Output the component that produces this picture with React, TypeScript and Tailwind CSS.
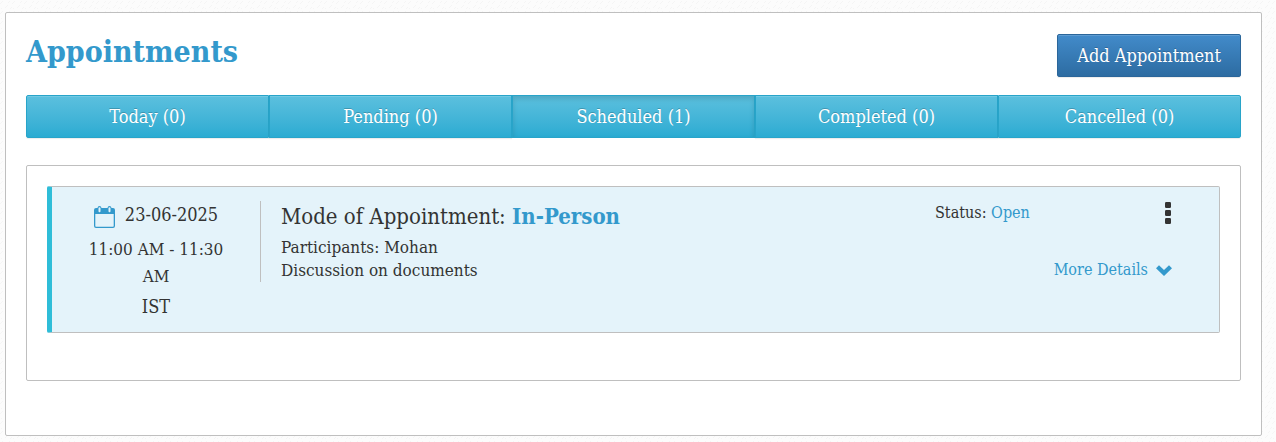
import { clsx } from 'clsx';

const tabs = [
  { label: 'Today', count: 0 },
  { label: 'Pending', count: 0 },
  { label: 'Scheduled', count: 1 },
  { label: 'Completed', count: 0 },
  { label: 'Cancelled', count: 0 },
];

const appointments = [
  {
    date: '23-06-2025',
    time: '11:00 AM - 11:30 AM',
    zone: 'IST',
    mode: 'In-Person',
    participants: 'Mohan',
    description: 'Discussion on documents',
    status: 'Open',
  },
];

const CalendarIcon = () => (
  <svg width="21" height="22" viewBox="0 0 21 22" className="shrink-0" aria-hidden="true">
    <path
      fill="#3399cc"
      fillRule="evenodd"
      d="M2 2h1.500q.2-2 2-2t2 2h6q.2-2 2-2t2 2H19a2 2 0 0 1 2 2v16a2 2 0 0 1-2 2H2a2 2 0 0 1-2-2V4a2 2 0 0 1 2-2zM1.300 8v12q0 .7.700.700h17q.7 0 .7-.7V8z"
    />
    <path stroke="#e4f3fa" strokeWidth="2" strokeLinecap="round" d="M5.500 2.200v3M15.500 2.200v3" />
  </svg>
);

const DotsIcon = () => (
  <svg width="7" height="22" viewBox="0 0 7 22" fill="#333333" aria-hidden="true">
    <rect width="6" height="6" y="0" rx="1.200" />
    <rect width="6" height="6" y="8" rx="1.200" />
    <rect width="6" height="6" y="16" rx="1.200" />
  </svg>
);

const ChevronIcon = () => (
  <svg width="16" height="11" viewBox="0 0 16 11" fill="#3399cc" aria-hidden="true">
    <path d="M0 3.300 3 .300l5 4.600 5-4.600 3 3L8 11z" />
  </svg>
);

const Background = () => (
  <svg className="absolute inset-0 -z-10 h-full w-full" aria-hidden="true">
    <defs>
      <pattern id="weave" width="12" height="10" patternUnits="userSpaceOnUse">
        <path d="M0 4l3-3M5 8l3-3M8 3l2-2M1 9l1-1M10 9l2-2" stroke="#f5f5f5" />
      </pattern>
    </defs>
    <rect width="100%" height="100%" fill="url(#weave)" />
  </svg>
);

export default function App() {
  return (
    <div className="relative isolate min-h-screen bg-[#fcfcfc] pt-3 pr-3.5 pb-1.5 pl-[5px] font-['Roboto_Slab','DejaVu_Serif_Condensed','DejaVu_Serif',serif] text-[#333333]">
      <Background />
      <main className="rounded-xs border border-[#bfbfbf] bg-white px-5 pt-[21px] pb-[54px]">
        <div className="flex items-start justify-between">
          <h1 className="text-[30px] leading-9 font-bold text-[#3399cc]">Appointments</h1>
          <button
            type="button"
            className="rounded-xs border border-[#2b669a] bg-linear-to-b from-[#428bca] to-[#2d6ca2] px-[19px] py-2 text-[18px] leading-[25px] text-white shadow-[inset_0_1px_0_rgba(255,255,255,0.15),0_1px_1px_rgba(0,0,0,0.075)] text-shadow-[0_-1px_0_rgba(0,0,0,0.2)]"
          >
            Add Appointment
          </button>
        </div>

        <div className="mt-[18px] flex">
          {tabs.map((tab) => (
            <button
              key={tab.label}
              type="button"
              aria-pressed={tab.label === 'Scheduled'}
              className={clsx(
                'flex-1 border border-[#28a4c9] bg-linear-to-b from-[#5bc0de] to-[#2aabd2] py-2 text-[18px] leading-[25px] text-white text-shadow-[0_-1px_0_rgba(0,0,0,0.2)] first:rounded-l-xs last:rounded-r-xs',
                tab.label === 'Scheduled'
                  ? 'shadow-[inset_0_3px_5px_rgba(0,0,0,0.125)]'
                  : 'shadow-[inset_0_1px_0_rgba(255,255,255,0.15),0_1px_1px_rgba(0,0,0,0.075)]'
              )}
            >
              {tab.label} ({tab.count})
            </button>
          ))}
        </div>

        <div className="mt-[27px] rounded-xs border border-[#bfbfbf] px-5 pt-5 pb-[47px]">
          {appointments.map((item) => (
            <article
              key={item.date}
              className="flex items-start rounded-xs border border-l-[5px] border-[#bfbfbf] border-l-[#2fbdd8] bg-[#e4f3fa] pt-3.5 pb-3"
            >
              <div className="w-52 shrink-0 px-8 text-center text-[18px] leading-[27px]">
                <div className="flex items-end justify-center gap-2.5">
                  <CalendarIcon />
                  <span>{item.date}</span>
                </div>
                <p className="mt-2 text-[17px]">{item.time}</p>
                <p className="mt-[3px]">{item.zone}</p>
              </div>

              <div className="min-w-0 flex-1 border-l border-[#bfbfbf] pl-5">
                <h2 className="mb-1 text-[22px] leading-[30px]">
                  Mode of Appointment: <b className="text-[#3399cc]">{item.mode}</b>
                </h2>
                <p className="text-[17px] leading-[23px]">Participants: {item.participants}</p>
                <p className="text-[17px] leading-[23px]">{item.description}</p>
              </div>

              <div className="w-[284px] shrink-0 pr-[47px] text-[16px] leading-6">
                <div className="flex items-center justify-between">
                  <p>
                    Status: <span className="text-[#3399cc]">{item.status}</span>
                  </p>
                  <button type="button" aria-label="Appointment options">
                    <DotsIcon />
                  </button>
                </div>
                <div className="mt-[33px] flex justify-end">
                  <button type="button" className="flex items-center gap-2 text-[#3399cc]">
                    More Details
                    <ChevronIcon />
                  </button>
                </div>
              </div>
            </article>
          ))}
        </div>
      </main>
    </div>
  );
}
